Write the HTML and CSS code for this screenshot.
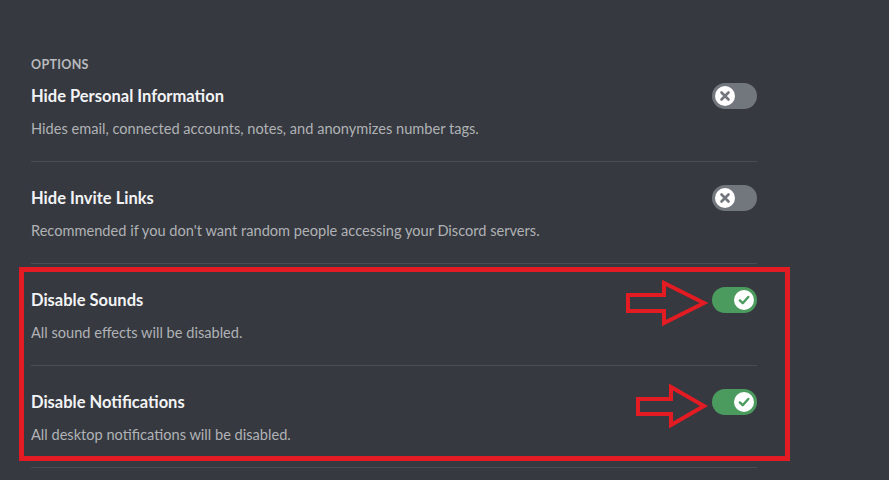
FILE: index.html
```html
<!DOCTYPE html>
<html>
<head>
<meta charset="utf-8">
<link rel="stylesheet" href="styles.css">
</head>
<body>
<main class="page">
  <section class="options">
    <h2 class="section-label">Options</h2>

    <div class="setting">
      <div class="setting-head">
        <span class="setting-title">Hide Personal Information</span>
        <span class="toggle toggle-off"><span class="knob"><svg viewBox="0 0 20 20" width="20" height="20"><path d="M6.5 6.5 L13.5 13.5 M13.5 6.5 L6.5 13.5" stroke="#72767d" stroke-width="2.6" stroke-linecap="round"/></svg></span></span>
      </div>
      <p class="setting-desc">Hides email, connected accounts, notes, and anonymizes number tags.</p>
    </div>

    <div class="setting">
      <div class="setting-head">
        <span class="setting-title">Hide Invite Links</span>
        <span class="toggle toggle-off"><span class="knob"><svg viewBox="0 0 20 20" width="20" height="20"><path d="M6.5 6.5 L13.5 13.5 M13.5 6.5 L6.5 13.5" stroke="#72767d" stroke-width="2.6" stroke-linecap="round"/></svg></span></span>
      </div>
      <p class="setting-desc">Recommended if you don't want random people accessing your Discord servers.</p>
    </div>

    <div class="highlighted">
      <div class="setting">
        <div class="setting-head">
          <span class="setting-title">Disable Sounds</span>
          <span class="toggle toggle-on"><span class="knob"><svg viewBox="0 0 20 20" width="20" height="20"><path d="M5.8 10.4 L8.7 13.2 L14.3 7" fill="none" stroke="#4c9b5e" stroke-width="2.4" stroke-linecap="round" stroke-linejoin="round"/></svg></span></span>
        </div>
        <p class="setting-desc">All sound effects will be disabled.</p>
      </div>

      <div class="setting">
        <div class="setting-head">
          <span class="setting-title">Disable Notifications</span>
          <span class="toggle toggle-on"><span class="knob"><svg viewBox="0 0 20 20" width="20" height="20"><path d="M5.8 10.4 L8.7 13.2 L14.3 7" fill="none" stroke="#4c9b5e" stroke-width="2.4" stroke-linecap="round" stroke-linejoin="round"/></svg></span></span>
        </div>
        <p class="setting-desc">All desktop notifications will be disabled.</p>
      </div>

      <div class="annotation-box"></div>
      <svg class="annotation-arrow arrow-one" width="84" height="46" viewBox="0 0 84 46">
        <polygon points="3,15 39,15 39,3 79,23 39,43 39,31 3,31" fill="none" stroke="#e31b23" stroke-width="4" stroke-linejoin="miter"/>
      </svg>
      <svg class="annotation-arrow arrow-two" width="74" height="46" viewBox="0 0 74 46">
        <polygon points="3,15 36,15 36,3 69,22 36,41 36,30 3,30" fill="none" stroke="#e31b23" stroke-width="4" stroke-linejoin="miter"/>
      </svg>
    </div>
  </section>
</main>
</body>
</html>
```

FILE: styles.css
```css
* { box-sizing: border-box; }

html, body {
  margin: 0;
  padding: 0;
  background: #36393f;
  height: 100%;
  overflow: hidden;
}

body {
  font-family: Lato, "Noto Sans", sans-serif;
}

.page {
  padding: 57px 0 0 31px;
  width: 757px;
}

.section-label {
  margin: 0 0 10px;
  font-size: 12.5px;
  line-height: 16px;
  font-weight: 700;
  text-transform: uppercase;
  letter-spacing: 0.3px;
  color: #b9bbbe;
}

.setting {
  padding-bottom: 22px;
  border-bottom: 1px solid #4a4d54;
  margin-bottom: 23px;
}

.setting-head {
  display: flex;
  align-items: center;
  justify-content: space-between;
  height: 25px;
}

.setting-title {
  font-size: 16.5px;
  font-weight: 700;
  color: #f2f3f5;
}

.setting-desc {
  margin: 11px 0 0;
  font-size: 14.6px;
  line-height: 20px;
  color: #b0b2b6;
}

.toggle {
  width: 45px;
  height: 26px;
  border-radius: 13px;
  display: flex;
  align-items: center;
  padding: 0 3px;
}

.toggle-off {
  background: #72767d;
  justify-content: flex-start;
}

.toggle-on {
  background: #4c9b5e;
  justify-content: flex-end;
}

.knob {
  width: 20px;
  height: 20px;
  border-radius: 50%;
  background: #fff;
  display: flex;
}

.highlighted {
  position: relative;
}

.annotation-box {
  position: absolute;
  left: -12px;
  top: -20px;
  width: 771px;
  height: 194px;
  border: 5px solid #e31b23;
  pointer-events: none;
}

.annotation-arrow {
  position: absolute;
}

.arrow-one {
  left: 594px;
  top: -7px;
}

.arrow-two {
  left: 604px;
  top: 97px;
}
```
